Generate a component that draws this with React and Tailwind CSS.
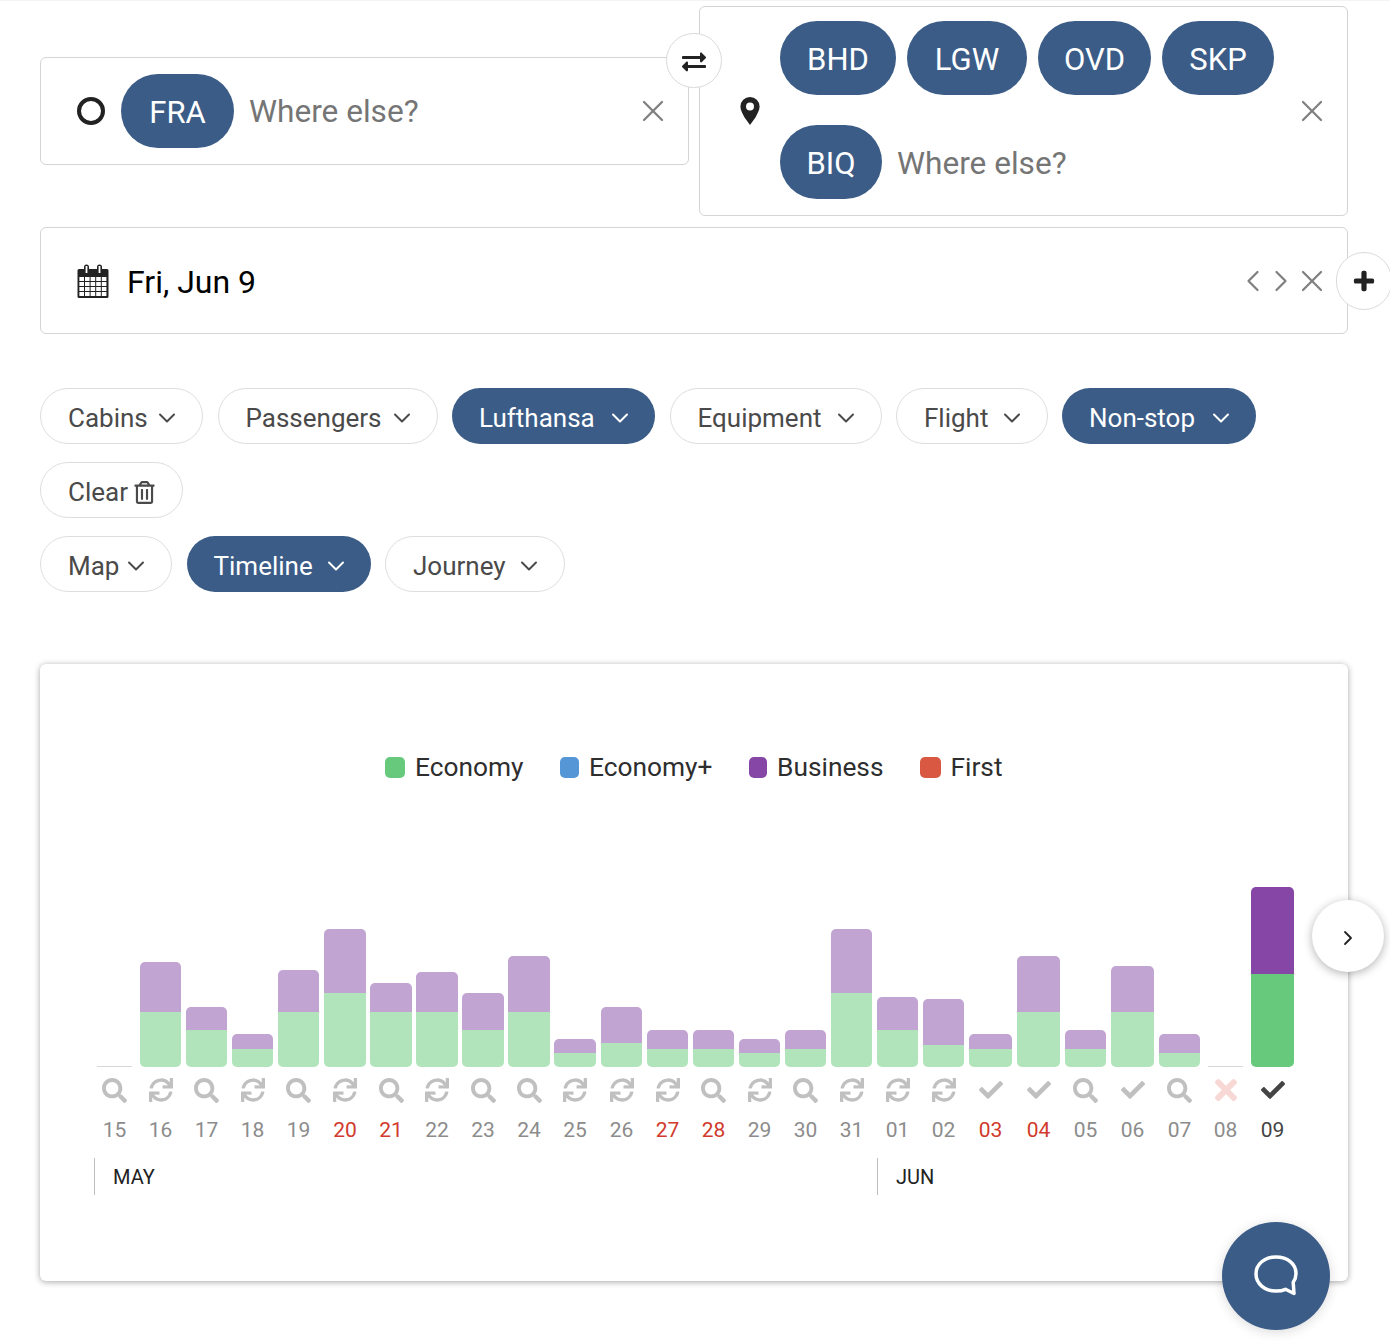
import React from "react";
import { ChevronDown, ChevronLeft, ChevronRight, X } from "lucide-react";
import { FaCheck, FaExchangeAlt, FaPlus, FaRegTrashAlt, FaSearch, FaSync, FaTimes } from "react-icons/fa";

// top = bar top on the page, split = where purple turns green, step = column pitch
const days = [
  { d: "15", icon: "search", step: 46, w: 41, empty: true },
  { d: "16", icon: "sync", step: 46, w: 41, top: 962, split: 1012 },
  { d: "17", icon: "search", step: 46, w: 41, top: 1007, split: 1030 },
  { d: "18", icon: "sync", step: 46, w: 41, top: 1034, split: 1049 },
  { d: "19", icon: "search", step: 46, w: 41, top: 970, split: 1012 },
  { d: "20", icon: "sync", step: 46, w: 42, top: 929, split: 993, red: true },
  { d: "21", icon: "search", step: 46, w: 42, top: 983, split: 1012, red: true },
  { d: "22", icon: "sync", step: 46, w: 42, top: 972, split: 1012 },
  { d: "23", icon: "search", step: 46, w: 42, top: 993, split: 1030 },
  { d: "24", icon: "search", step: 46, w: 42, top: 956, split: 1012 },
  { d: "25", icon: "sync", step: 47, w: 42, top: 1039, split: 1053 },
  { d: "26", icon: "sync", step: 46, w: 41, top: 1007, split: 1043 },
  { d: "27", icon: "sync", step: 46, w: 41, top: 1030, split: 1049, red: true },
  { d: "28", icon: "search", step: 46, w: 41, top: 1030, split: 1049, red: true },
  { d: "29", icon: "sync", step: 46, w: 41, top: 1039, split: 1053 },
  { d: "30", icon: "search", step: 46, w: 41, top: 1030, split: 1049 },
  { d: "31", icon: "sync", step: 46, w: 41, top: 929, split: 993 },
  { d: "01", icon: "sync", step: 46, w: 41, top: 997, split: 1030 },
  { d: "02", icon: "sync", step: 46, w: 41, top: 999, split: 1045 },
  { d: "03", icon: "check", step: 48, w: 43, top: 1034, split: 1049, red: true },
  { d: "04", icon: "check", step: 48, w: 43, top: 956, split: 1012, red: true },
  { d: "05", icon: "search", step: 46, w: 41, top: 1030, split: 1049 },
  { d: "06", icon: "check", step: 48, w: 43, top: 966, split: 1012 },
  { d: "07", icon: "search", step: 46, w: 41, top: 1034, split: 1053 },
  { d: "08", icon: "cross", step: 46, w: 41, empty: true },
  { d: "09", icon: "checkDark", step: 46, w: 43, top: 887, split: 974, selected: true },
];

const filters = [
  { label: "Cabins", width: "w-[163px]" },
  { label: "Passengers", width: "w-[220px]" },
  { label: "Lufthansa", width: "w-[203px]", active: true },
  { label: "Equipment", width: "w-[212px]" },
  { label: "Flight", width: "w-[151.500px]" },
  { label: "Non-stop", width: "w-[194px]", active: true },
];

const views = [
  { label: "Map", width: "w-[132px]" },
  { label: "Timeline", width: "w-[184px]", active: true },
  { label: "Journey", width: "w-[180px]" },
];

const legend = [
  { label: "Economy", color: "bg-[#66c97c]", width: "w-[139px]" },
  { label: "Economy+", color: "bg-[#5596d6]", width: "w-[153px]" },
  { label: "Business", color: "bg-[#8646a6]", width: "w-[135px]" },
  { label: "First", color: "bg-[#d95841]", width: "w-[84px]" },
];

const Pill = ({ children, width }) => (
  <span className={`h-[74px] ${width} rounded-[37px] bg-[#3a5c87] text-white text-[31px] pt-1 flex items-center justify-center`}>
    {children}
  </span>
);

const Chip = ({ label, width, active }) => (
  <button
    className={`${width} h-[56px] rounded-[28px] pl-[27px] pr-7 pt-1 flex items-center justify-between text-[26px] ${
      active ? "bg-[#3a5c87] text-white" : "bg-white text-[#4a4a4a] border border-[#dedede]"
    }`}
  >
    <span>{label}</span>
    <ChevronDown size={28} strokeWidth={1.7} className="-mr-[7px] -my-2" />
  </button>
);

const CloseIcon = () => <X size={36} strokeWidth={1.5} className="text-[#808080]" />;

const DayIcon = ({ type }) => {
  if (type === "search") return <FaSearch size={25} className="text-[#c0c0c0]" />;
  if (type === "sync") return <FaSync size={24} className="text-[#c0c0c0]" />;
  if (type === "check") return <FaCheck size={24} className="text-[#c0c0c0]" />;
  if (type === "cross") return <FaTimes size={32} className="shrink-0 text-[#f8d8d4]" />;
  return <FaCheck size={24} className="text-[#444444]" />;
};

const CalendarIcon = () => (
  <svg width="32" height="34" viewBox="0 0 32 34" className="text-[#222222]">
    <path d="M2 5h5V3a2.5 2.5 0 0 1 5 0v2h8V3a2.5 2.5 0 0 1 5 0v2h5a1.5 1.5 0 0 1 1.5 1.5v26A1.5 1.5 0 0 1 30 34H2a1.5 1.5 0 0 1-1.5-1.5v-26A1.5 1.5 0 0 1 2 5z" fill="currentColor" />
    <rect x="8.6" y="2" width="1.8" height="7" fill="#ffffff" />
    <rect x="21.6" y="2" width="1.8" height="7" fill="#ffffff" />
    <g fill="#ffffff">
      {[0, 1, 2, 3].map((r) =>
        [0, 1, 2, 3, 4].map((c) => (
          <rect key={`${r}-${c}`} x={2.4 + c * 5.6} y={13 + r * 5} width="4.6" height="4" />
        ))
      )}
    </g>
  </svg>
);

const PinIcon = () => (
  <svg width="20" height="28" viewBox="0 0 20 28" className="text-[#222222]">
    <path
      fillRule="evenodd"
      d="M10 0a9.6 9.6 0 0 1 9.6 9.6c0 3.6-2.2 7-4 10.600L10 28l-5.600-7.800c-1.800-3.600-4-7-4-10.600A9.600 9.600 0 0 1 10 0zm0 5.600a4 4 0 1 0 0 8 4 4 0 0 0 0-8z"
      fill="currentColor"
    />
  </svg>
);

const ChatIcon = () => (
  <svg width="46" height="42" viewBox="0 0 46 42" fill="none" stroke="#ffffff" strokeWidth="3.5" strokeLinejoin="round">
    <path d="M23 2c11.500 0 20 6.800 20 16.500 0 3.500-1 6.300-2.800 8.800L41 38.500l-8.500-4.200C29.800 35.500 26.500 36 23 36 11.500 36 3 28.500 3 19 3 9 11.500 2 23 2z" />
  </svg>
);

const App = () => {
  return (
    <div
      className="relative w-[1390px] min-h-[1341px] overflow-hidden bg-white border-t border-[#f4f4f4] px-10 pt-[5px]"
      style={{ fontFamily: "Roboto, 'Noto Sans', sans-serif" }}
    >
      {/* Origin / destination */}
      <div className="relative w-[1308px] flex items-center gap-[10px]">
        <div className="w-[649px] h-[108px] rounded-[6px] border border-[#d4d4d4] flex items-center pl-9 pr-[17px]">
          <span className="w-7 h-7 rounded-full border-[4px] border-[#222222]" />
          <div className="ml-4">
            <Pill width="w-[113px]">FRA</Pill>
          </div>
          <span className="ml-[15px] pt-[2px] text-[31.600px] text-[#757575]">Where else?</span>
          <div className="ml-auto">
            <CloseIcon />
          </div>
        </div>

        <div className="w-[649px] h-[210px] rounded-[6px] border border-[#d4d4d4] flex items-center pl-10 pr-[17px]">
          <PinIcon />
          <div className="ml-[20px] mb-[2px] w-[510px] flex flex-col gap-[30px]">
            <div className="flex gap-[11px]">
              <Pill width="w-[116px]">BHD</Pill>
              <Pill width="w-[120px]">LGW</Pill>
              <Pill width="w-[113px]">OVD</Pill>
              <Pill width="w-[112px]">SKP</Pill>
            </div>
            <div className="flex items-center">
              <Pill width="w-[102px]">BIQ</Pill>
              <span className="ml-[15px] pt-1 text-[31.600px] text-[#757575]">Where else?</span>
            </div>
          </div>
          <div className="ml-auto">
            <CloseIcon />
          </div>
        </div>

        {/* Swap */}
        <button className="absolute left-[626px] top-[27px] w-[56px] h-[55px] pt-[2px] rounded-full bg-white border border-[#dadada] flex items-center justify-center text-[#222222]">
          <FaExchangeAlt size={24} />
        </button>
      </div>

      {/* Date */}
      <div className="relative mt-[11px] w-[1308px] h-[107px] rounded-[6px] border border-[#d4d4d4] flex items-center pl-9 pr-[17px]">
        <CalendarIcon />
        <span className="ml-[18px] pt-[2px] text-[32px] text-black">Fri, Jun 9</span>
        <div className="ml-auto flex items-center text-[#808080]">
          <ChevronLeft size={36} strokeWidth={1.5} />
          <ChevronRight size={36} strokeWidth={1.5} className="-ml-2" />
          <X size={36} strokeWidth={1.5} className="-ml-[5px]" />
        </div>
      </div>
      <button className="absolute left-[1336px] top-[251px] w-[56px] h-[58px] rounded-full bg-white border border-[#dadada] flex items-center justify-center text-[#222222]">
        <FaPlus size={22} stroke="currentColor" strokeWidth={24} />
      </button>

      {/* Filters */}
      <div className="mt-[54px] flex flex-wrap gap-x-[14.500px] gap-y-[18px]">
        {filters.map((f) => (
          <Chip key={f.label} {...f} />
        ))}
        <button className="w-[143px] h-[56px] rounded-[28px] pl-[27px] pt-1 flex items-center gap-[5px] text-[26px] text-[#4a4a4a] bg-white border border-[#dedede]">
          <span>Clear</span>
          <FaRegTrashAlt size={23} />
        </button>
      </div>

      <div className="mt-[18px] flex gap-x-[14.500px]">
        {views.map((v) => (
          <Chip key={v.label} {...v} />
        ))}
      </div>

      {/* Timeline card */}
      <div className="relative mt-[72px] w-[1308px] h-[617px] rounded-[6px] bg-white shadow-[0_1px_6px_rgba(0,0,0,0.35)] pl-[54px] pt-[87px]">
        <div className="-ml-[54px] flex justify-center gap-9">
          {legend.map((l) => (
            <div key={l.label} className={`${l.width} flex items-center gap-[10px] h-8 text-[26.300px] text-[#2e2e2e] whitespace-nowrap`}>
              <span className={`w-[21px] h-[21px] rounded-[5px] ${l.color}`} />
              <span className="pt-[2px]">{l.label}</span>
            </div>
          ))}
        </div>

        <div className="mt-[104px] flex">
          {days.map((day) => (
            <div key={day.d} className="shrink-0" style={{ width: day.step }}>
              <div className="h-[180px] flex items-end" style={{ width: day.w }}>
                {day.empty ? (
                  <div className="mx-auto w-[35px] h-px bg-[#d8d8d8]" />
                ) : (
                  <div className="w-full rounded-[5px] overflow-hidden flex flex-col" style={{ height: 1067 - day.top }}>
                    <div
                      className={day.selected ? "bg-[#8646a6]" : "bg-[#c2a4d2]"}
                      style={{ height: day.split - day.top }}
                    />
                    <div className={`flex-1 ${day.selected ? "bg-[#66c97c]" : "bg-[#b2e4bc]"}`} />
                  </div>
                )}
              </div>
              <div className="mt-[11px] h-6 flex items-center justify-center" style={{ width: day.w }}>
                <DayIcon type={day.icon} />
              </div>
              <div
                className={`mt-[13px] h-7 pt-1 flex items-center justify-center text-[21px] ${
                  day.red ? "text-[#d13a2c]" : day.selected ? "text-[#444444]" : "text-[#8c8c8c]"
                }`}
                style={{ width: day.w }}
              >
                {day.d}
              </div>
            </div>
          ))}
        </div>

        <div className="mt-[15px] flex h-[37px] text-[20px] text-[#222222]">
          <div className="w-[783px] border-l border-[#bdbdbd] pl-[18px] pt-[1px] flex items-center">MAY</div>
          <div className="border-l border-[#bdbdbd] pl-[18px] pt-[1px] flex items-center">JUN</div>
        </div>

        {/* Scroll timeline */}
        <button className="absolute -right-9 top-[236px] w-[72px] h-[72px] pt-1 rounded-full bg-white shadow-[0_2px_10px_rgba(0,0,0,0.3)] flex items-center justify-center text-[#222222]">
          <ChevronRight size={24} strokeWidth={1.8} />
        </button>
      </div>

      {/* Chat */}
      <button className="fixed right-[60px] bottom-[11px] w-[108px] h-[108px] rounded-full bg-[#3a5c87] shadow-[0_2px_12px_rgba(0,0,0,0.15)] flex items-center justify-center">
        <ChatIcon />
      </button>
    </div>
  );
};

export default App;
